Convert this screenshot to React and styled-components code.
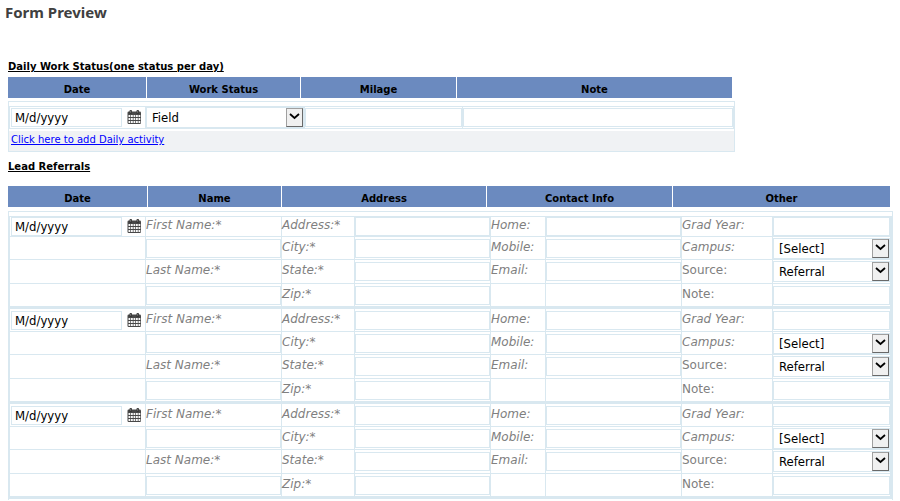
import React, { useId } from 'react'
import styled, { createGlobalStyle, ThemeProvider } from 'styled-components'

const theme = {
  line: '#d9e8f0',
  header: '#6b8abf',
  label: '#808080',
  heading: '#404040',
  band: '#f0f2f4',
}

const GlobalStyle = createGlobalStyle`
*, *::before, *::after {
  box-sizing: border-box;
}
body {
  margin: 0;
  background: #fff;
  color: #000;
  font-family: 'DejaVu Sans', Verdana, sans-serif;
  font-size: 12px;
}
`

const Page = styled.main`
display: flow-root;
padding: 0 7px 0 8px;
`

const Title = styled.h1`
margin: 2px 0 38px -3px;
font-family: 'Noto Sans', 'Segoe UI', sans-serif;
font-size: 15px;
line-height: 20px;
color: ${props => props.theme.heading};
`

const SectionTitle = styled.h2`
margin: 0;
font-size: 10px;
line-height: 13px;
text-decoration: underline;
`

const DailySection = styled.section`
max-width: 727px;
margin-bottom: 8px;
`

const HeaderTable = styled.table`
display: block;
margin: ${props => props.$gap}px 3px ${props => (props.$wide ? 4 : 3)}px 0;
thead {
  display: block;
}
`

const HeaderRow = styled.tr`
display: grid;
grid-template-columns: ${props => props.$columns};
gap: 1px;
`

const HeaderCell = styled.th`
height: 21px;
padding: 4px 0 0;
background-color: ${props => props.theme.header};
font-size: 10px;
line-height: 17px;
text-align: center;
`

const Box = styled.div`
border: 1px solid ${props => props.theme.line};
border-bottom-width: ${props => (props.$open ? 0 : 1)}px;
padding-top: 4px;
padding-bottom: ${props => (props.$open ? 1 : 0)}px;
`

const DailyRow = styled.div`
display: grid;
grid-template-columns: 136px 159fr 158fr 270fr;
height: 23px;
border: 1px solid ${props => props.theme.line};
`

const DailyCell = styled.div`
padding-top: ${props => (props.$flush ? 0 : 1)}px;
min-width: 0;
border-right: 1px solid ${props => props.theme.line};
&:last-child {
  border-right: 0;
}
`

const Footer = styled.div`
height: 20px;
margin-top: 2px;
padding: 0 2px;
background-color: ${props => props.theme.band};
font-size: 10px;
line-height: 18px;
a {
  color: #00f;
}
`

const Records = styled.div`
border: solid ${props => props.theme.line};
border-width: 1px 2px 0 1px;
`

const Record = styled.div`
border-bottom: 2px solid ${props => props.theme.line};
`

const Row = styled.div`
display: grid;
grid-template-columns: 136px 136fr 73px 136fr 55px 136fr 91px 117fr;
height: ${props => props.$height}px;
border-bottom: 1px solid ${props => props.theme.line};
`

const Cell = styled.div`
min-width: 0;
padding-top: ${props => props.$top}px;
border-right: 1px solid ${props => props.theme.line};
&:last-child {
  border-right: 0;
}
`

const Label = styled.label`
display: block;
color: ${props => props.theme.label};
font-size: 12px;
line-height: 16px;
font-style: ${props => (props.$plain ? 'normal' : 'italic')};
white-space: nowrap;
`

const TextInput = styled.input`
display: block;
width: 100%;
height: 19px;
padding: 0 3px;
border: 1px solid ${props => props.theme.line};
border-radius: 0;
background: #fff;
color: #000;
font-family: 'DejaVu Sans Condensed', Tahoma, sans-serif;
font-size: 13px;
outline: 0;
`

const DateWrap = styled.div`
display: flex;
align-items: flex-start;
justify-content: space-between;
padding: 0 3px 0 1px;
${TextInput} {
  width: 111px;
}
`

const IconButton = styled.button`
display: block;
width: 15px;
height: 15px;
margin-top: 2px;
padding: 0;
border: 0;
background: none;
cursor: pointer;
svg {
  display: block;
}
`

const SelectWrap = styled.div`
position: relative;
height: 21px;
`

const NativeSelect = styled.select`
appearance: none;
display: block;
width: 100%;
height: 21px;
padding: 0 20px 1px 5px;
border: 1px solid ${props => props.theme.line};
border-radius: 0;
background: #fff;
color: #000;
font-family: 'DejaVu Sans Condensed', Tahoma, sans-serif;
font-size: 13px;
outline: 0;
`

const Arrow = styled.span`
position: absolute;
top: 1px;
right: 1px;
width: 17px;
height: 19px;
display: grid;
place-items: center;
padding-bottom: 2px;
border: 1px solid;
border-color: #a0a0a0 #696969 #696969 #a0a0a0;
background: #f0f0f0;
pointer-events: none;
`

function CalendarIcon() {
  return (
    <svg width="15" height="15" viewBox="0 0 15 15" aria-hidden="true">
      <rect x="0.500" y="1.500" width="13.500" height="12.500" rx="1.200" fill="#484848" />
      <rect x="2.500" y="0" width="2.500" height="4" rx="1" fill="#333" />
      <rect x="9.500" y="0" width="2.500" height="4" rx="1" fill="#333" />
      <path d="M3.700 0.800v2M10.700 0.800v2" stroke="#999" strokeWidth="0.700" />
      <path
        d="M1.500 5.900h12M1.500 8.900h12M1.500 11.900h12"
        stroke="#f8f8f8"
        strokeWidth="2"
        strokeDasharray="1.800 0.700"
      />
    </svg>
  )
}

function DateField() {
  return (
    <DateWrap>
      <TextInput aria-label="Date" defaultValue="M/d/yyyy" />
      <IconButton type="button" aria-label="Pick a date">
        <CalendarIcon />
      </IconButton>
    </DateWrap>
  )
}

function Select({ value, ...rest }) {
  return (
    <SelectWrap>
      <NativeSelect defaultValue={value} {...rest}>
        <option>{value}</option>
      </NativeSelect>
      <Arrow>
        <svg width="11" height="7" viewBox="0 0 11 7" aria-hidden="true">
          <path d="M1 1l4.500 4L10 1" fill="none" stroke="#000" strokeWidth="1.800" />
        </svg>
      </Arrow>
    </SelectWrap>
  )
}

function Header({ columns, titles, gap, wide }) {
  return (
    <HeaderTable $gap={gap} $wide={wide}>
      <thead>
        <HeaderRow $columns={columns}>
          {titles.map(title => (
            <HeaderCell key={title} scope="col">{title}</HeaderCell>
          ))}
        </HeaderRow>
      </thead>
    </HeaderTable>
  )
}

function Referral({ first }) {
  const id = useId()
  // the first record sits right under the top line of the box
  const top = first ? 0 : 2

  const label = (name, text, pad, plain) => (
    <Cell $top={pad}>
      <Label htmlFor={id + name} $plain={plain}>{text}</Label>
    </Cell>
  )
  const input = (name, pad = 2) => (
    <Cell $top={pad}>
      <TextInput id={id + name} />
    </Cell>
  )

  return (
    <Record>
      <Row $height={first ? 20 : 23}>
        <Cell $top={top}><DateField /></Cell>
        {label('first', 'First Name:*', top)}
        {label('address', 'Address:*', top)}
        {input('address', top)}
        {label('home', 'Home:', top)}
        {input('home', top)}
        {label('grad', 'Grad Year:', top)}
        {input('grad', top)}
      </Row>
      <Row $height={23}>
        <Cell />
        {input('first')}
        {label('city', 'City:*', 2)}
        {input('city')}
        {label('mobile', 'Mobile:', 2)}
        {input('mobile')}
        {label('campus', 'Campus:', 2)}
        <Cell $top={1}><Select id={id + 'campus'} value="[Select]" /></Cell>
      </Row>
      <Row $height={24}>
        <Cell />
        {label('last', 'Last Name:*', 2)}
        {label('state', 'State:*', 2)}
        {input('state')}
        {label('email', 'Email:', 2)}
        {input('email')}
        {label('source', 'Source:', 2, true)}
        <Cell $top={1}><Select id={id + 'source'} value="Referral" /></Cell>
      </Row>
      <Row $height={23}>
        <Cell />
        {input('last')}
        {label('zip', 'Zip:*', 2)}
        {input('zip')}
        <Cell />
        <Cell />
        {label('note', 'Note:', 2, true)}
        {input('note')}
      </Row>
    </Record>
  )
}

function App() {
  return (
    <ThemeProvider theme={theme}>
      <GlobalStyle />
      <Page>
        <Title>Form Preview</Title>
        <DailySection>
          <SectionTitle>Daily Work Status(one status per day)</SectionTitle>
          <Header
            gap={4}
            columns="138px 153fr 155fr 275fr"
            titles={['Date', 'Work Status', 'Milage', 'Note']}
          />
          <Box>
            <DailyRow>
              <DailyCell><DateField /></DailyCell>
              <DailyCell $flush><Select aria-label="Work Status" value="Field" /></DailyCell>
              <DailyCell><TextInput aria-label="Milage" /></DailyCell>
              <DailyCell><TextInput aria-label="Note" /></DailyCell>
            </DailyRow>
            <Footer>
              <a href="#add">Click here to add Daily activity</a>
            </Footer>
          </Box>
        </DailySection>
        <section>
          <SectionTitle>Lead Referrals</SectionTitle>
          <Header
            wide
            gap={13}
            columns="139px 133fr 204fr 185fr 217fr"
            titles={['Date', 'Name', 'Address', 'Contact Info', 'Other']}
          />
          <Box $open>
            <Records>
              <Referral first />
              <Referral />
              <Referral />
            </Records>
          </Box>
        </section>
      </Page>
    </ThemeProvider>
  )
}

export default App
